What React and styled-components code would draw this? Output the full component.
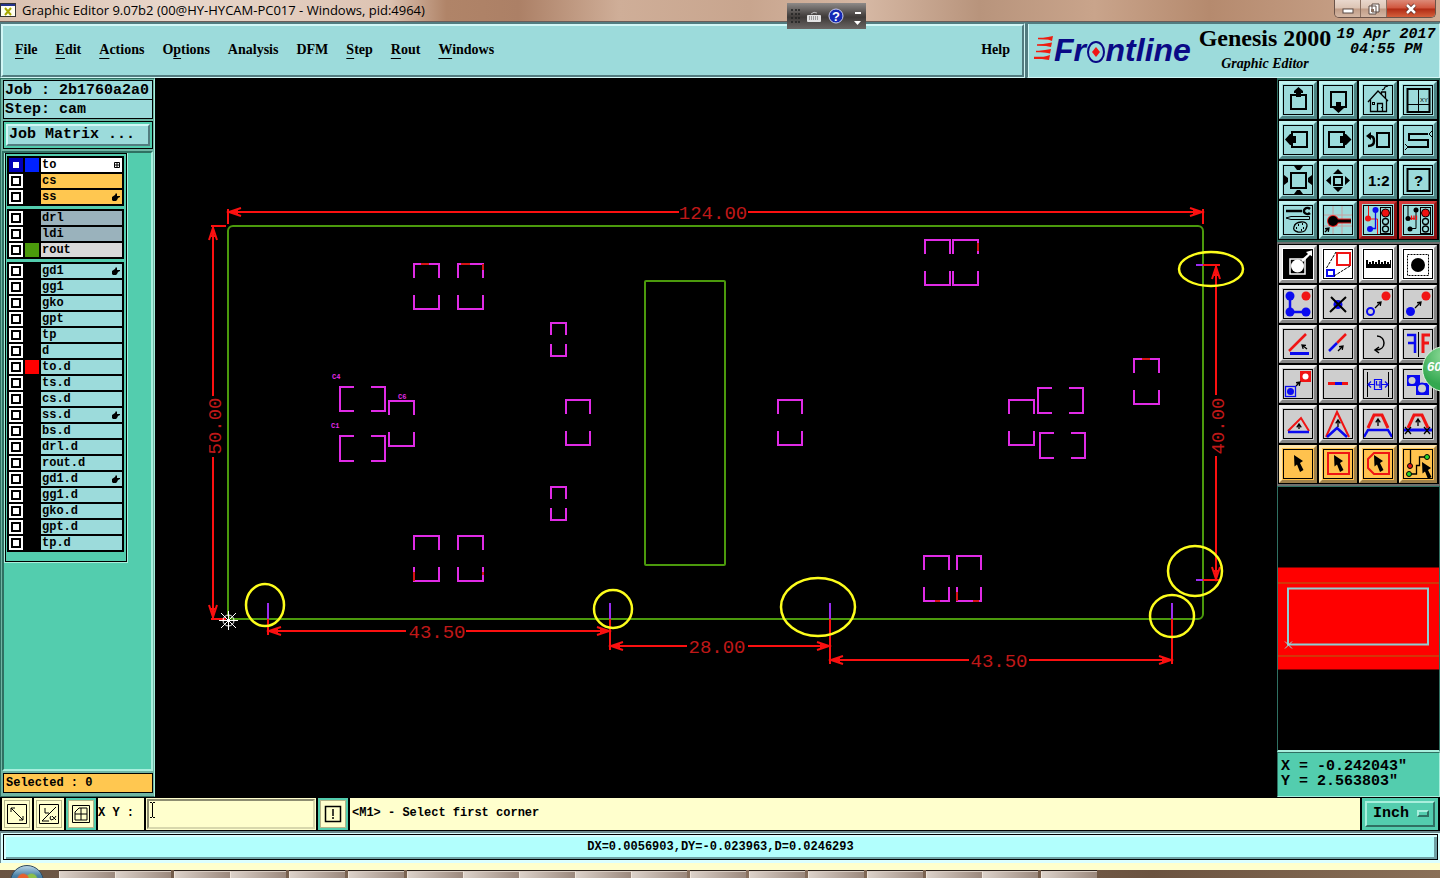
import React from 'react';
import styled, { createGlobalStyle, css } from 'styled-components';

const C = {
  teal: '#9cdbdb',
  tealLight: '#d2f7f6',
  tealDark: '#527c80',
  green: '#53cdae',
  greenLight: '#a8efdd',
  greenDark: '#2f7062',
  cream: '#ffffcd',
  orange: '#ffc750',
  cyan: '#b2fffd',
  red: '#fb1010',
  dimText: '#c01818',
  blue: '#0a0af0',
  pad: '#e02be6',
  board: '#4b9a0c',
};

const serif = '"Liberation Serif", serif';
const mono = '"Liberation Mono", monospace';

const Global = createGlobalStyle`
  * { box-sizing: border-box; }
  body { margin: 0; background: #000; color: #000; }
  button, input, select { font: inherit; color: inherit; margin: 0; padding: 0; border-radius: 0; }
`;

const bevel = (light, dark, width = 2) => css`
  border-style: solid;
  border-width: ${width}px;
  border-color: ${light} ${dark} ${dark} ${light};
`;

const Screen = styled.div`
  display: flex;
  flex-direction: column;
  height: 100vh;
  min-height: 720px;
  overflow: hidden;
  position: relative;
`;

/* ---------- window title ---------- */
const TitleBar = styled.header`
  flex: none;
  height: 22px;
  display: flex;
  align-items: center;
  gap: 6px;
  padding-bottom: 1px;
  border-bottom: 1px solid #6b5d58;
  background: linear-gradient(90deg, #d9bfae 0, #e9d8cc 12%, #ddc3b2 27%, #b08468 31%, #ac8066 36%, #cfae98 43%,
    #c8a58e 52%, #d6b8a4 60%, #b8947c 68%, #c9a48b 76%, #b58a6e 84%, #d0ac94 100%);
`;
const Title = styled.h1`
  margin: 0;
  flex: 1;
  font: 400 13px/20px "Open Sans", sans-serif;
  white-space: nowrap;
`;
const WindowButtons = styled.div`
  align-self: flex-start;
  display: flex;
  height: 18px;
  margin-right: 4px;
  border: 1px solid #6a5349;
  border-top: 0;
  border-radius: 0 0 5px 5px;
  overflow: hidden;
`;
const WindowButton = styled.button`
  width: ${(p) => (p.$close ? 48 : 26)}px;
  border: 0;
  border-right: ${(p) => (p.$close ? 0 : 1)}px solid #8a6f60;
  display: grid;
  place-items: center;
  background: ${(p) =>
    p.$close
      ? 'linear-gradient(#dc8a78 0, #d0543c 48%, #b02a14 52%, #d4603c 100%)'
      : 'linear-gradient(#e9d8cd 0, #dcc3b3 48%, #c09c86 52%, #d4b7a4 100%)'};
`;

const LanguageBar = styled.div`
  position: absolute;
  top: 3px;
  left: 787px;
  width: 79px;
  height: 26px;
  background: linear-gradient(#8e8a88 0, #4a4644 45%, #3f3b39 55%, #6a6664 100%);
`;

/* ---------- menu and brand ---------- */
const Header = styled.div`
  flex: none;
  height: 56px;
  display: flex;
  gap: 2px;
  background: ${C.tealDark};
  padding-top: 1px;
`;
const HeaderPanel = styled.div`
  ${bevel(C.tealDark, C.tealLight, 1)}
  display: flex;
  flex: ${(p) => (p.$fill ? '1 1 auto' : '0 0 413px')};
  min-width: 0;
`;
const MenuBar = styled.nav`
  flex: 1;
  display: flex;
  align-items: center;
  gap: 18px;
  padding: 0 12px 2px;
  background: ${C.teal};
  ${bevel(C.tealLight, C.tealDark, 2)}
`;
const MenuButton = styled.button`
  border: 0;
  background: none;
  font: 700 14px/20px ${serif};
  white-space: nowrap;
  margin-left: ${(p) => (p.$last ? 'auto' : 0)};
`;
const Mnemonic = styled.span`
  text-decoration: underline 1px;
  text-underline-offset: 4px;
`;
const Brand = styled.div`
  flex: 1;
  display: flex;
  padding: 0 3px;
  background: ${C.teal};
  border-left: 1px solid ${C.tealLight};
`;
const Product = styled.div`
  flex: none;
  width: 138px;
  text-align: center;
  white-space: nowrap;
`;
const ProductName = styled.div`
  font: 700 24px/28px ${serif};
`;
const ProductModule = styled.div`
  font: italic 700 14px/24px ${serif};
`;
const Clock = styled.time`
  flex: 1;
  text-align: center;
  white-space: nowrap;
  font: italic 700 15px/15px ${mono};
  padding: 3px 0 0 2px;
`;

/* ---------- main area ---------- */
const Main = styled.main`
  flex: 1 1 0;
  min-height: 0;
  display: flex;
  background: #000;
`;
const Sidebar = styled.aside`
  flex: none;
  width: 155px;
  display: flex;
  flex-direction: column;
  background: #6fb5a4;
  border: 1px solid ${C.greenDark};
  border-right-color: ${C.greenLight};
  padding: 1px;
  font-family: ${mono};
  font-weight: 700;
`;
const InfoBox = styled.div`
  flex: none;
  height: 20px;
  margin: 0 0 -1px 1px;
  padding: 1px 0 0 1px;
  border: 1px solid #000;
  background: ${C.teal};
  font-size: 15px;
  line-height: 18px;
  white-space: nowrap;
`;
const MatrixFrame = styled.div`
  flex: none;
  margin: 3px 0 2px 1px;
  padding: 2px;
  border: 1px solid #000;
  background: ${C.green};
`;
const MatrixButton = styled.button`
  width: 100%;
  height: 22px;
  padding-left: 1px;
  text-align: left;
  font-size: 15px;
  line-height: 18px;
  background: ${C.teal};
  ${bevel(C.tealLight, C.tealDark, 2)}
`;
const LayerScroll = styled.div`
  flex: 1 1 0;
  min-height: 0;
  overflow: hidden;
  background: ${C.green};
  border: 2px solid ${C.greenDark};
  border-right-color: ${C.greenLight};
  border-bottom-color: ${C.greenLight};
`;
const LayerPanel = styled.div`
  width: 122px;
  border: 1px solid #000;
  outline: 1px solid ${C.greenLight};
  margin-left: 1px;
  padding: 2px 2px 9px 1px;
  display: flex;
  flex-direction: column;
  gap: 3px;
`;
const LayerGroup = styled.div`
  background: #000;
  padding: 1px;
`;
const LayerRow = styled.label`
  display: grid;
  grid-template-columns: 14px 14px 1fr;
  column-gap: 2px;
  height: 16px;
  padding: 1px;
  font-size: 12px;
  line-height: 14px;
`;
const LayerCheck = styled.input`
  appearance: none;
  width: 14px;
  height: 14px;
  background: #fff;
  border: 2px solid ${(p) => (p.$active ? '#0000b8' : '#fff')};
  outline: ${(p) => (p.$active ? 0 : 2)}px solid #000;
  outline-offset: -4px;
  box-shadow: inset 0 0 0 2px ${(p) => (p.$active ? '#0000b8' : '#000')};
`;
const Swatch = styled.span`
  background: ${(p) => p.$color || '#000'};
`;
const LayerName = styled.span`
  display: flex;
  align-items: center;
  justify-content: space-between;
  padding: 0 2px 0 1px;
  background: ${(p) => p.$color};
`;
const Selected = styled.div`
  flex: none;
  height: 20px;
  margin: 2px 0 2px 1px;
  padding-left: 2px;
  border: 1px solid #000;
  background: ${C.orange};
  font-size: 12px;
  line-height: 18px;
`;

const Canvas = styled.section`
  flex: 1 1 0;
  min-width: 0;
  svg { display: block; width: 100%; height: 100%; }
`;

/* ---------- tools ---------- */
const ToolColumn = styled.aside`
  flex: none;
  width: 163px;
  display: flex;
  flex-direction: column;
  position: relative;
`;
const ToolGrid = styled.div`
  display: grid;
  grid-template-columns: repeat(4, 38px);
  gap: 2px;
  padding: 1px;
  background: #000;
  border: 1px solid ${(p) => p.$frame};
  border-top-width: 2px;
  border-bottom-width: 2px;
`;
const toolTones = {
  teal: { face: C.teal, light: '#bff3f0', dark: '#4d8484' },
  alarm: { face: C.teal, light: '#d23a3a', dark: '#8c1414' },
  white: { face: '#ffffff', light: '#ececec', dark: '#8e8e8e' },
  gray: { face: '#cecece', light: '#efefef', dark: '#858585' },
  orange: { face: '#ffc24e', light: '#ffe6ae', dark: '#a0814a' },
};
const Tool = styled.button`
  width: 38px;
  height: 38px;
  display: grid;
  place-items: center;
  background: ${(p) => toolTones[p.$tone].face};
  ${(p) => bevel(toolTones[p.$tone].light, toolTones[p.$tone].dark, 3)}
  svg { display: block; width: 30px; height: 30px; }
`;
const Bubble = styled.div`
  position: absolute;
  top: 268px;
  right: -28px;
  width: 46px;
  height: 46px;
  border-radius: 50%;
  border: 1px solid #dff5df;
  background: radial-gradient(circle at 50% 20%, #8fdc9a, #34a850 70%);
  color: #fff;
  padding-left: 4px;
  font: italic 700 13px/40px "Liberation Sans", sans-serif;
`;
const Overview = styled.div`
  flex: 1 1 0;
  min-height: 0;
  border: 1px solid ${C.greenDark};
  border-bottom: 2px solid ${C.greenLight};
  background: #000;
  svg { display: block; width: 100%; height: 100%; }
`;
const Coordinates = styled.output`
  flex: none;
  height: 45px;
  padding: 6px 3px;
  background: ${C.green};
  ${bevel(C.greenDark, C.greenLight, 1)}
  font: 700 15px/15px ${mono};
  white-space: pre;
`;

/* ---------- command line ---------- */
const CommandBar = styled.div`
  flex: none;
  height: 34px;
  display: flex;
  gap: 2px;
  padding: 1px 2px;
  background: #000;
  font: 700 12px/16px ${mono};
`;
const SnapButton = styled.button`
  width: 30px;
  display: grid;
  place-items: center;
  border: 2px solid ${(p) => (p.$on ? C.green : C.cream)};
  background: ${C.cream};
  box-shadow: inset 0 0 0 1px #b5b58a;
`;
const XYLabel = styled.label`
  width: 46px;
  padding: 7px 0;
  background: ${C.cream};
  white-space: pre;
`;
const XYField = styled.div`
  width: 170px;
  display: flex;
  position: relative;
  padding: 1px;
  background: ${C.cream};
`;
const XYInput = styled.input`
  flex: 1;
  min-width: 0;
  padding: 0 4px;
  background: ${C.cream};
  border: 2px solid;
  border-color: #8d8d70 #d8d8ac #d8d8ac #8d8d70;
`;
const TextPointer = styled.svg`
  position: absolute;
  left: 3px;
  top: 4px;
`;
const Prompt = styled.output`
  flex: 1;
  padding: 7px 2px;
  background: ${C.cream};
`;
const UnitBox = styled.div`
  width: 76px;
  padding: 3px;
  display: flex;
  background: ${C.green};
  position: relative;
`;
const UnitSelect = styled.select`
  appearance: none;
  flex: 1;
  min-width: 0;
  padding-left: 6px;
  background: ${C.green};
  ${bevel(C.greenLight, C.greenDark, 2)}
  font: 700 15px/20px ${mono};
`;
const UnitMark = styled.span`
  position: absolute;
  right: 9px;
  top: 12px;
  width: 12px;
  height: 7px;
  pointer-events: none;
  ${bevel(C.greenLight, C.greenDark, 2)}
`;

/* ---------- status and taskbar ---------- */
const StatusBar = styled.div`
  flex: none;
  height: 32px;
  padding: 1px 2px 3px;
  background: #dcffff;
  border-top: 2px solid #6d8a8e;
  border-left: 1px solid #6d8a8e;
`;
const StatusText = styled.output`
  display: block;
  height: 26px;
  border: 1px solid #000;
  box-shadow: inset 2px 2px #d8ffff, inset -3px -2px #6fa0a4;
  background: ${C.cyan};
  text-align: center;
  font: 700 12px/24px ${mono};
`;
const Taskbar = styled.footer`
  flex: none;
  height: 15px;
  padding-left: 59px;
  display: flex;
  gap: 3px;
  border-top: 7px solid ${C.cream};
  background: linear-gradient(90deg, #6a5442, #8a7260 50%, #6b5340 80%, #8a7058);
  position: relative;
`;
const TaskGroup = styled.div`
  display: flex;
  border-top: 1px solid #2a211b;
`;
const TaskButton = styled.button`
  width: 56px;
  height: 7px;
  border: 0;
  border-left: 1px solid #efe4da;
  border-top: 1px solid #d8ccc2;
  background: linear-gradient(100deg, #dcd2ca, #9a877b);
`;
const StartButton = styled.button`
  position: absolute;
  left: 10px;
  top: -5px;
  width: 34px;
  height: 34px;
  border-radius: 50%;
  border: 1px solid #2e4a60;
  background: radial-gradient(circle at 38% 42%, #e8602c 0 18%, transparent 24%),
    radial-gradient(circle at 64% 42%, #8cc04a 0 18%, transparent 24%),
    linear-gradient(#b8d4e4, #4a82a8 30%, #24557c);
`;

/* ---------- icons, drawn on a 30 x 30 grid ---------- */
const Arrow = ({ x1, y1, x2, y2 }) => {
  const a = Math.atan2(y2 - y1, x2 - x1);
  const p = (o) => `${x2 - 4 * Math.cos(a + o)},${y2 - 4 * Math.sin(a + o)}`;
  return <path d={`M${x1},${y1}L${x2},${y2}M${p(0.6)}L${x2},${y2}L${p(-0.6)}`} fill="none" stroke="#000" strokeWidth="1.3" />;
};
const Cursor = ({ x = 0, y = 0 }) => (
  <path transform={`translate(${x} ${y})`} d="M11 6 L20 12 L17 14 L20.5 21 L17 23 L14 15.500 L11.500 17.500 Z" />
);
const Lights = () => (
  <g>
    <rect x="17.5" y="2.5" width="10" height="26" fill="none" stroke="#000" />
    <circle cx="22.5" cy="8" r="4" fill="#f01010" stroke="#000" />
    <circle cx="22.5" cy="16.5" r="3" fill="none" stroke="#000" strokeWidth="1.3" />
    <circle cx="22.5" cy="24" r="3" fill="none" stroke="#000" strokeWidth="1.3" />
  </g>
);
const k = { fill: 'none', stroke: '#000', strokeWidth: 2 };
const thin = { fill: 'none', stroke: '#000', strokeWidth: 1 };
const rd = { fill: 'none', stroke: '#f01414', strokeWidth: 2 };
const bl = { fill: 'none', stroke: C.blue, strokeWidth: 2 };

const viewTools = [
  ['Pan up', 'teal', <><rect x="8" y="10" width="15" height="14" {...k} /><path d="M15.500 2 L20 6 V8 H18 V12 H13 V8 H11 V6Z" /></>],
  ['Pan down', 'teal', <><rect x="8" y="7" width="15" height="15" {...k} /><path d="M13 17 H18 V21 H21 V23 L15.500 28 L10 23 V21 H13Z" /></>],
  ['Home', 'teal', <><path d="M5 17 L15 6 L25 16 M7.500 15 V26.500 H23.500 V15 M14.500 26 V18.500 H19.500 V26 M18.500 9 V7 H22.500 V13 M19 5 L21 4 L22 2 L25 1" {...thin} strokeWidth="1.3" /><rect x="9.5" y="17.5" width="2" height="2" {...thin} /><path d="M18 22.500h1" {...thin} /></>],
  ['Coordinates view', 'teal', <><rect x="4.500" y="4" width="22" height="23" {...k} /><path d="M15.500 4 V27 M5 19.500 H26" {...thin} /><text x="17" y="17" fontSize="6" fontFamily="Liberation Sans, sans-serif">XY</text></>],
  ['Pan left', 'teal', <><rect x="9" y="7" width="15" height="15" {...k} /><path d="M2 14.500 L7 9 H9 V11 H13 V18 H9 V20 H7Z" /></>],
  ['Pan right', 'teal', <><rect x="6" y="7" width="15" height="15" {...k} /><path d="M28.500 14.500 L23 9 H21 V11 H17 V18 H21 V20 H23Z" /></>],
  ['Previous view', 'teal', <><rect x="14" y="8" width="12" height="14" {...k} /><path d="M5 21 Q11 21 11 16 Q11 11 7 11" {...k} strokeWidth="2.500" /><path d="M3 11 L8 7 V15Z" /></>],
  ['Serpentine', 'teal', <><path d="M25 9 H6 V15 H25 V22 H5" {...k} /><path d="M29 6 L26 9 L29 12 M2 19 L5 22 L2 25" {...thin} /></>],
  ['Zoom in', 'teal', <><rect x="8" y="8" width="15" height="15" {...k} /><path d="M11 1 H20 L17 5 H14Z M11 29 H20 L17 25 H14Z M1 10 V20 L5 17 V13Z M29 10 V20 L25 17 V13Z" /></>],
  ['Zoom out', 'teal', <><rect x="11" y="12" width="8" height="8" {...k} /><path d="M10 9 L15 4 L20 9Z M10 22 L15 27 L20 22Z M8 11 V20 L3 15.500Z M22 11 V20 L27 15.500Z" /></>],
  ['Scale one to two', 'teal', <text x="5" y="21" fontSize="15" fontWeight="700" fontFamily="Liberation Sans, sans-serif">1:2</text>],
  ['Query', 'teal', <><rect x="4.500" y="4" width="22" height="22" {...k} /><text x="11" y="21" fontSize="15" fontWeight="700" fontFamily="Liberation Sans, sans-serif">?</text></>],
  ['Setup', 'teal', <><path d="M3 6 H19" {...k} strokeWidth="2.500" /><path d="M27 4 A3.500 3 0 1 0 27 8" {...k} strokeWidth="2.500" /><path d="M3 13 L8 11.500 H26.500 V14.500 H8Z" {...thin} /><path d="M11 22 C12 16 25 15 24 21 C23 25 22 28 15 27 C11 26 10 24 11 22Z" {...thin} strokeWidth="1.300" /><path d="M15 20h1m3 -1h1m-7 4h1m6 0h1m-3 2h1" {...thin} strokeWidth="2" /></>],
  ['Grid snap', 'teal', <><path d="M10 1V29M19 1V29M1 10H29M1 21H29" stroke="#c8a0a0" strokeWidth="1" /><circle cx="10" cy="16" r="6" fill="#f02020" /><path d="M10 16H28" stroke="#f02020" strokeWidth="5" /><circle cx="10" cy="16" r="5" /><path d="M10 16H28" stroke="#000" strokeWidth="3" /><Arrow x1={2} y1={27} x2={6} y2={23} /></>],
  ['Net check', 'alarm', <><path d="M5.500 1 V14 H14.500 V29" {...rd} strokeWidth="1" /><path d="M12.500 5 V23.500 H7" {...k} stroke={C.blue} strokeWidth="1.300" /><circle cx="5" cy="13.500" r="3" fill="#f01414" /><circle cx="12.500" cy="5" r="3" fill={C.blue} /><circle cx="7" cy="24" r="3" fill={C.blue} /><Lights /></>],
  ['Spacing check', 'alarm', <><path d="M5 1 V13 M13 5 V23.500 H7" {...thin} /><path d="M6 13.500 H12 M8.500 10.500 V15 M11 10.500 V15 M13.500 10.500 V15" {...rd} strokeWidth="1.300" /><circle cx="5" cy="13.500" r="2.500" /><circle cx="13" cy="5" r="2.500" /><circle cx="7" cy="24" r="2.500" /><Lights /></>],
];

const editTools = [
  ['Resize feature', 'white', <><rect width="30" height="30" /><rect x="7" y="10" width="15" height="15" fill="none" stroke="#fff" strokeWidth="1.500" /><circle cx="14.500" cy="17" r="6.500" fill="#fff" /><path d="M18 11 L25 5 L23 3 L30 1 V8 L27 6 L20 13Z" fill="#fff" /></>],
  ['Transform', 'white', <><rect x="14" y="4" width="13" height="12" {...rd} /><rect x="4" y="21" width="7" height="6" {...bl} /><path d="M3.500 19 L13 3 M11 27 L27 17" {...thin} strokeDasharray="3 1" /></>],
  ['Measure', 'white', <><path d="M3 19 V11 H5 V15 H6 V13 H8 V15 H9 V12 H11 V15 H12 V13 H14 V15 H15 V11 H17 V15 H18 V13 H20 V15 H21 V12 H23 V15 H24 V13 H26 V15 H27 V11 H28 V19Z" /></>],
  ['Select area', 'white', <><rect x="4.500" y="5.500" width="21" height="21" {...thin} strokeDasharray="2 1" /><circle cx="15" cy="16" r="7" /></>],
  ['Add polyline', 'gray', <><path d="M7 7 V23 H23" {...bl} strokeWidth="2.500" /><circle cx="7" cy="7" r="4.500" fill={C.blue} /><circle cx="7" cy="23" r="4.500" fill={C.blue} /><circle cx="23" cy="23" r="4.500" fill={C.blue} /><circle cx="23" cy="7" r="4.500" fill="#f01414" /></>],
  ['Delete', 'gray', <><circle cx="15" cy="15.500" r="4.500" fill={C.blue} /><path d="M8 8 L23 23 M23 8 L7 23" {...k} /></>],
  ['Move', 'gray', <><circle cx="7.500" cy="22.500" r="3.500" {...bl} /><circle cx="23" cy="7" r="4.500" fill="#f01414" /><Arrow x1={12} y1={19} x2={18} y2={13} /></>],
  ['Copy', 'gray', <><circle cx="7.500" cy="22.500" r="4.500" fill={C.blue} /><circle cx="23" cy="7" r="4.500" fill="#f01414" /><Arrow x1={12} y1={19} x2={18} y2={13} /></>],
  ['Rotate', 'gray', <><path d="M6 22 L23 5" {...rd} strokeWidth="2.500" /><path d="M7 24.500 H26" {...bl} strokeWidth="3" /><Arrow x1={24} y1={20} x2={19} y2={16} /></>],
  ['Stretch line', 'gray', <><path d="M14 14 L23 5" {...rd} strokeWidth="2.500" /><path d="M6 22 L14 14" {...bl} strokeWidth="2.500" /><Arrow x1={15} y1={22} x2={20} y2={17} /></>],
  ['Turn', 'gray', <><path d="M14 7 C19 7 21 11 21 14 C21 18 18 21 13 21 M16 18 L12 21 L16 24" {...k} strokeWidth="1.500" /></>],
  ['Mirror', 'gray', <><path d="M4 6 H12 V24 M5 14 H12" {...bl} strokeWidth="2.500" /><path d="M27 6 H20 V24 M26 14 H20" {...rd} strokeWidth="3" /><path d="M15.500 3 V28" {...thin} /></>],
  ['Substitute', 'gray', <><rect x="17" y="2" width="11" height="11" fill="#f01414" /><circle cx="22.500" cy="7.500" r="3" fill="#fff" /><rect x="2.500" y="17.500" width="10" height="10" {...bl} strokeWidth="1.300" /><circle cx="7.500" cy="22.500" r="3.500" fill={C.blue} /><Arrow x1={13} y1={17} x2={17} y2={13} /></>],
  ['Break line', 'gray', <><path d="M5 14.500 H25" {...rd} strokeWidth="3" /><path d="M12 14.500 H19" {...bl} strokeWidth="3" /></>],
  ['Spacing', 'gray', <><path d="M4.500 3 V28 M25.500 3 V28" {...thin} /><path d="M5 15.500 H11 M19 15.500 H25 M8 12.500 L5 15.500 L8 18.500 M22 12.500 L25 15.500 L22 18.500 M11.500 10.500 H18.500 V20.500 H11.500Z M13.500 12 V16 H17 M17 12 V19" {...bl} strokeWidth="1.200" /></>],
  ['Surface', 'gray', <><path d="M4 6 H17 V14 H26 V26 H13 V17 H4Z" fill={C.blue} /><circle cx="9" cy="11.500" r="3.500" fill="#cecece" /><circle cx="19" cy="19.500" r="5" fill="#cecece" stroke={C.blue} strokeWidth="2" /></>],
  ['Trapezoid low', 'gray', <><path d="M5 22 L18 9 L26 22" {...rd} /><path d="M5 23 H26" {...bl} strokeWidth="2.500" /><Arrow x1={16} y1={20} x2={16} y2={15} /></>],
  ['Triangle raise', 'gray', <><path d="M3 28 L14 3 L26 28" {...rd} /><path d="M4 28 L14 19 L24 28" {...bl} strokeWidth="2.500" /><Arrow x1={15} y1={18} x2={15} y2={11} /></>],
  ['Trapezoid raise', 'gray', <><path d="M5 19 L11 6 H19 L25 19" {...rd} strokeWidth="3" /><path d="M1 28 L5 21 H25 L29 28" {...bl} strokeWidth="2.500" /><Arrow x1={15} y1={17} x2={15} y2={10} /></>],
  ['Trapezoid cut', 'gray', <><path d="M5 19 L11 6 H19 L25 19" {...rd} strokeWidth="3" /><path d="M1 21 H29" {...bl} strokeWidth="3" /><path d="M2 18 L8 25 M8 18 L2 25 M21 18 L27 25 M27 18 L21 25" {...thin} strokeWidth="1.300" /><Arrow x1={15} y1={17} x2={15} y2={10} /></>],
  ['Select single', 'orange', <Cursor />],
  ['Select in rectangle', 'orange', <><rect x="5" y="4" width="21" height="21" {...rd} /><Cursor /></>],
  ['Select in polygon', 'orange', <><path d="M5 10 L11 4 H26 V25 H11 L5 19Z" {...rd} /><Cursor /></>],
  ['Select net', 'orange', <><path d="M7.500 1 V17 M6 25 H13.500 V16.500 H16.500 V8 H22" {...thin} strokeWidth="1.300" /><circle cx="7" cy="17" r="2.500" fill="#e01414" stroke="#000" /><circle cx="24" cy="8" r="2.500" fill="#28d428" stroke="#000" /><circle cx="6" cy="25" r="2.500" fill="#28d428" stroke="#000" /><Cursor x={8} y={7} /></>],
];

const ToolButtons = ({ tools }) =>
  tools.map(([name, tone, art]) => (
    <Tool key={name} $tone={tone} aria-label={name}>
      <svg viewBox="0 0 30 30">
        {art}
        <rect x="0.5" y="0.5" width="29" height="29" fill="none" stroke="#000" />
      </svg>
    </Tool>
  ));

/* ---------- layers ---------- */
const T = C.teal;
const layerGroups = [
  [['to', '#fff', '#0022ff', 'grid'], ['cs', C.orange], ['ss', C.orange, null, 'hand']],
  [['drl', '#9ab2bc'], ['ldi', '#9ab2bc'], ['rout', '#d9d9d9', C.board]],
  [['gd1', T, null, 'hand'], ['gg1', T], ['gko', T], ['gpt', T], ['tp', T], ['d', T], ['to.d', T, '#ff0000'], ['ts.d', T], ['cs.d', T],
    ['ss.d', T, null, 'hand'], ['bs.d', T], ['drl.d', T], ['rout.d', T], ['gd1.d', T, null, 'hand'], ['gg1.d', T], ['gko.d', T], ['gpt.d', T], ['tp.d', T]],
];
const LayerMark = ({ kind }) =>
  kind === 'grid' ? (
    <svg width="6" height="6" viewBox="0 0 6 6"><path d="M.5 .5h5v5h-5zM3 0v6M0 3h6" fill="none" stroke="#000" /></svg>
  ) : (
    <svg width="8" height="8" viewBox="0 0 8 8"><path d="M0 4 L3 2 L4 0 L5 1 V3 H8 V4 L6 5 L5 7 L4 8 H1 L0 7Z" /></svg>
  );

/* ---------- board ---------- */
const uprightPads = [
  [414, 264, 439, 309], [458, 264, 483, 309], [551, 323, 566, 356], [389, 401, 414, 446], [566, 400, 590, 445],
  [551, 487, 566, 520], [414, 536, 439, 581], [458, 536, 483, 581], [778, 400, 802, 445], [925, 240, 950, 285],
  [953, 240, 978, 285], [1134, 359, 1159, 404], [1009, 400, 1034, 445], [924, 556, 949, 601], [957, 556, 981, 601],
];
const flatPads = [[340, 387, 385, 411], [340, 436, 385, 461], [1038, 388, 1083, 413], [1040, 433, 1085, 458]];
const upright = ([x, y, r, b]) => {
  const t = b - y < 40 ? 12 : 14;
  return `M${x},${y + t}V${y}H${r}V${y + t}M${x},${b - t}V${b}H${r}V${b - t}`;
};
const flat = ([x, y, r, b]) => `M${x + 14},${y}H${x}V${b}H${x + 14}M${r - 14},${y}H${r}V${b}H${r - 14}`;
const rings = [
  [1211, 269, 32, 17], [1195, 571, 27, 25], [1172, 616, 22, 21], [818, 607, 37, 29], [613, 609, 19, 19], [265, 605, 19, 21],
];
const heads = [
  [228, 212, 0], [1203, 212, 180], [213, 227, 90], [213, 618, 270], [268, 631, 0], [610, 631, 180],
  [610, 646, 0], [830, 646, 180], [830, 660, 0], [1172, 660, 180], [1216, 266, 90], [1216, 580, 270],
];
const dims = [
  [713, 219, '124.00'], [437, 638, '43.50'], [717, 653, '28.00'], [999, 667, '43.50'], [221, 426, '50.00', 1], [1224, 426, '40.00', 1],
];

const Board = () => (
  <svg viewBox="155 78 1122 719" role="img" aria-label="Board drawing">
    <g fill="none" strokeWidth="2">
      <rect x="228" y="226" width="975" height="393" rx="5" stroke={C.board} />
      <rect x="645" y="281" width="80" height="284" rx="1" stroke={C.board} />
      <path d={uprightPads.map(upright).join('') + flatPads.map(flat).join('')} stroke={C.pad} shapeRendering="crispEdges" />
      <path d="M421 264h8M461 264h9M483 264v6M978 243v8M1142 359h8M957 592v9M414 572v9M483 572v3M973 601h6M935 601h5" stroke="#d41414" shapeRendering="crispEdges" />
      <path
        d="M228 209v15M228 212H679M748 212H1203M1203 209v15M211 226h15M213 226V396M213 457V619M211 619h15M268 619v16M268 631H406M466 631H610M610 619v31M610 646H687M748 646H830M830 619v45M830 660H969M1029 660H1172M1172 619v45M1203 265h17M1216 265V395M1216 456V580M1203 580h17"
        stroke={C.red}
        shapeRendering="crispEdges"
      />
      <path d="M268 603v16M610 603v16M830 603v16M1172 603v16M1196 265h7M1196 580h7" stroke="#9a2cf0" />
      {heads.map(([x, y, a]) => (
        <path key={`${x}-${y}`} transform={`translate(${x} ${y}) rotate(${a})`} d="M13 -4 L1 0 L13 4 M9 -2V2" stroke={C.red} />
      ))}
      {rings.map(([x, y, rx, ry]) => (
        <ellipse key={x} cx={x} cy={y} rx={rx} ry={ry} stroke="#fdfd1c" strokeWidth="2.500" />
      ))}
      <g stroke="#fff" strokeWidth="1">
        <circle cx="228.500" cy="620.500" r="5.500" />
        <path d="M228.500 611v19M219 620.500h19M221 613l15 15M236 613l-15 15" />
      </g>
    </g>
    <g fill={C.dimText} fontFamily="Liberation Mono, monospace" fontSize="19" textAnchor="middle">
      {dims.map(([x, y, text, turn]) => (
        <text key={x} x={x} y={y} transform={turn ? `rotate(-90 ${x} ${y})` : undefined}>{text}</text>
      ))}
    </g>
    <g fill={C.pad} fontFamily="Liberation Mono, monospace" fontSize="7" fontWeight="700">
      <text x="332" y="379">C4</text>
      <text x="398" y="399">C6</text>
      <text x="331" y="428">C1</text>
    </g>
  </svg>
);

const Logo = () => (
  <svg width="164" height="48" viewBox="0 0 164 48" role="img" aria-label="Frontline">
    <g fill="#ee1c10">
      <path d="M6 15 L21 12 L20 17 L16 15.500Z M5 21 L20 18.500 L19 23 L14 22Z M4 27.500 L19 25 L18 29.500 L13 28.500Z M2 33.500 H10 L18 31 L17 36 L10 35 H2Z" />
      <path d="M6 14.500H19M5 21H18M4 27.500H17M2 33.500H16" stroke="#ee1c10" strokeWidth="1.500" />
    </g>
    <text x="22" y="37" fontSize="32" fontWeight="700" fontStyle="italic" fontFamily="Liberation Sans, sans-serif" fill="#0a0a86">
      Fr<tspan fill="transparent">o</tspan>ntline
    </text>
    <ellipse cx="64" cy="28" rx="8" ry="10" fill="none" stroke="#0a0a86" strokeWidth="2" />
    <path d="M64 23 L68 28 L64 33 L60 28Z" fill="#f01414" />
  </svg>
);

const menus = [['', 'F', 'ile'], ['', 'E', 'dit'], ['', 'A', 'ctions'], ['O', 'p', 'tions'], ['Analysis'], ['DFM'], ['', 'S', 'tep'], ['', 'R', 'out'], ['', 'W', 'indows']];
const taskGroups = [2, 2, 1, 1, 5, 1, 1, 1, 1, 2, 1];

export default function App() {
  return (
    <Screen>
      <Global />
      <TitleBar>
        <svg width="16" height="16" viewBox="0 0 16 16">
          <rect x="0.500" y="1.500" width="15" height="13" fill="#fffff0" stroke="#333" />
          <path d="M1 3h14" stroke="#26348c" strokeWidth="2" />
          <path d="M5 6l6 7M11 6l-6 7" stroke="#a8a800" strokeWidth="2" />
        </svg>
        <Title>Graphic Editor 9.07b2 (00@HY-HYCAM-PC017 - Windows, pid:4964)</Title>
        <WindowButtons>
          <WindowButton aria-label="Minimize">
            <svg width="12" height="12"><rect x="1" y="6" width="10" height="4" fill="#fff" stroke="#5a4a44" /></svg>
          </WindowButton>
          <WindowButton aria-label="Restore">
            <svg width="12" height="12"><path d="M4 1h7v8h-7zM1 3h7v8h-7z" fill="#fff" stroke="#5a4a44" /><rect x="3" y="6" width="3" height="3" fill="#8a6f60" /></svg>
          </WindowButton>
          <WindowButton $close aria-label="Close">
            <svg width="12" height="12"><path d="M2 2l8 8M10 2l-8 8" stroke="#5a2a24" strokeWidth="4" /><path d="M2 2l8 8M10 2l-8 8" stroke="#fff" strokeWidth="2.500" /></svg>
          </WindowButton>
        </WindowButtons>
      </TitleBar>

      <Header>
        <HeaderPanel $fill>
          <MenuBar>
            {menus.map(([a, m, b]) => (
              <MenuButton key={a + m}>{a}{m && <Mnemonic>{m}</Mnemonic>}{b}</MenuButton>
            ))}
            <MenuButton $last>Help</MenuButton>
          </MenuBar>
        </HeaderPanel>
        <HeaderPanel>
          <Brand>
            <Logo />
            <Product>
              <ProductName>Genesis 2000</ProductName>
              <ProductModule>Graphic Editor</ProductModule>
            </Product>
            <Clock>19 Apr 2017<br />04:55 PM</Clock>
          </Brand>
        </HeaderPanel>
      </Header>

      <Main>
        <Sidebar>
          <InfoBox>Job : 2b1760a2a0</InfoBox>
          <InfoBox>Step: cam</InfoBox>
          <MatrixFrame><MatrixButton>Job Matrix ...</MatrixButton></MatrixFrame>
          <LayerScroll>
            <LayerPanel>
              {layerGroups.map((group, i) => (
                <LayerGroup key={i}>
                  {group.map(([name, face, color, mark]) => (
                    <LayerRow key={name}>
                      <LayerCheck type="checkbox" $active={name === 'to'} />
                      <Swatch $color={color} />
                      <LayerName $color={face}>{name}{mark && <LayerMark kind={mark} />}</LayerName>
                    </LayerRow>
                  ))}
                </LayerGroup>
              ))}
            </LayerPanel>
          </LayerScroll>
          <Selected>Selected : 0</Selected>
        </Sidebar>

        <Canvas><Board /></Canvas>

        <ToolColumn>
          <ToolGrid $frame={C.greenDark}><ToolButtons tools={viewTools} /></ToolGrid>
          <ToolGrid $frame="#6e6e6e"><ToolButtons tools={editTools} /></ToolGrid>
          <Bubble>60</Bubble>
          <Overview>
            <svg viewBox="1278 488 161 262" role="img" aria-label="Board overview">
              <rect x="1278" y="568" width="161" height="102" fill="#ff0000" />
              <path d="M1278 583.500h161M1278 656.500h161" stroke="#a86a10" />
              <rect x="1288" y="589" width="140" height="56" fill="none" stroke="#8fd0d4" strokeWidth="2" />
              <path d="M1285 642l7 7M1292 642l-7 7" stroke="#9cdbdb" />
            </svg>
          </Overview>
          <Coordinates>{'X = -0.242043"\nY = 2.563803"'}</Coordinates>
        </ToolColumn>
      </Main>

      <CommandBar>
        <SnapButton aria-label="Snap to corner">
          <svg width="20" height="20" viewBox="0 0 20 20" {...thin}><path d="M.5.5h19v19h-19zM4 4l12 12M4 8V4h4M12 16h4v-4" /></svg>
        </SnapButton>
        <SnapButton aria-label="Snap to angle">
          <svg width="20" height="20" viewBox="0 0 20 20" {...thin}><path d="M.5.5h19v19h-19zM3 17L17 3M6 4v5h4M3 17h7M12 12q-2 2 0 4q3 0 5-4M13 12l4 4" /></svg>
        </SnapButton>
        <SnapButton $on aria-label="Snap to grid">
          <svg width="18" height="18" viewBox="0 0 18 18" {...thin}><path d="M.5.5h17v17h-17zM3 15V7l4-4h8v12zM9 3v12M3 9h12" /></svg>
        </SnapButton>
        <XYLabel htmlFor="xy">X Y :</XYLabel>
        <XYField>
          <XYInput id="xy" type="text" />
          <TextPointer width="7" height="16" viewBox="0 0 7 16" {...thin}>
            <path d="M1 .5h2M4 .5h2M3.500 1v14M1 15.500h2M4 15.500h2" />
          </TextPointer>
        </XYField>
        <SnapButton $on aria-label="Alert">
          <svg width="18" height="18" viewBox="0 0 18 18" {...thin}><path d="M1.500 1.500h15v15h-15zM9 4v7M9 12v2" strokeWidth="1.500" /></svg>
        </SnapButton>
        <Prompt>&lt;M1&gt; - Select first corner</Prompt>
        <UnitBox>
          <UnitSelect aria-label="Unit" defaultValue="Inch"><option>Inch</option><option>mm</option></UnitSelect>
          <UnitMark />
        </UnitBox>
      </CommandBar>

      <StatusBar><StatusText>DX=0.0056903,DY=-0.023963,D=0.0246293</StatusText></StatusBar>

      <Taskbar>
        <StartButton aria-label="Start" />
        {taskGroups.map((n, i) => (
          <TaskGroup key={i}>
            {Array.from({ length: n }, (_, j) => <TaskButton key={j} aria-label={`Window ${i + 1}.${j + 1}`} />)}
          </TaskGroup>
        ))}
      </Taskbar>

      <LanguageBar>
        <svg width="79" height="26" viewBox="0 0 79 26">
          <path d="M5 6v16M9 6v16M12 6v16" stroke="#222" strokeWidth="1.500" strokeDasharray="2 2" />
          <rect x="20" y="12" width="14" height="7" rx="1" fill="#e4e4e4" />
          <path d="M22 14h10M22 16h10" stroke="#555" strokeDasharray="1 1" />
          <path d="M24 11q3-3 6-1" fill="none" stroke="#bbb" />
          <circle cx="49" cy="13" r="7" fill="#1428b4" stroke="#c8ccec" />
          <text x="45" y="18" fontSize="13" fontWeight="700" fontFamily="Liberation Sans, sans-serif" fill="#fff">?</text>
          <path d="M68 9h6v2h-6zM67 18h7l-3.500 4z" fill="#fff" />
        </svg>
      </LanguageBar>
    </Screen>
  );
}
